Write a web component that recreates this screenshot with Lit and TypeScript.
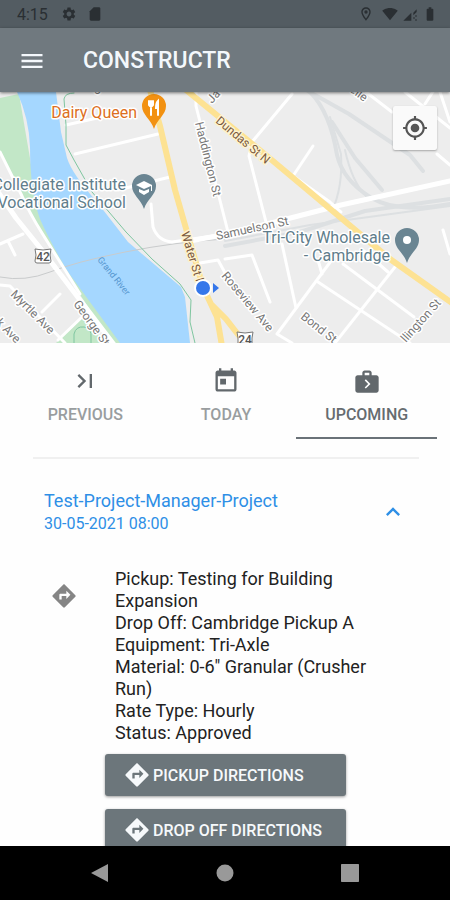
import { LitElement, html, css, svg } from "lit";
import { customElement, property, state } from "lit/decorators.js";
import { classMap } from "lit/directives/class-map.js";

const ICONS: Record<string, string> = {
  settings:
    "M19.14 12.94c.04-.3.06-.61.06-.94 0-.32-.02-.64-.07-.94l2.03-1.58c.18-.14.23-.41.12-.61l-1.92-3.32c-.12-.22-.37-.29-.59-.22l-2.39.96c-.5-.38-1.03-.7-1.62-.94l-.36-2.54c-.04-.24-.24-.41-.48-.41h-3.84c-.24 0-.43.17-.47.41l-.36 2.54c-.59.24-1.13.57-1.62.94l-2.39-.96c-.22-.08-.47 0-.59.22L2.74 8.87c-.12.21-.08.47.12.61l2.03 1.58c-.05.3-.09.63-.09.94s.02.64.07.94l-2.03 1.58c-.18.14-.23.41-.12.61l1.92 3.32c.12.22.37.29.59.22l2.39-.96c.5.38 1.03.7 1.62.94l.36 2.54c.05.24.24.41.48.41h3.84c.24 0 .44-.17.47-.41l.36-2.54c.59-.24 1.13-.56 1.62-.94l2.39.96c.22.08.47 0 .59-.22l1.92-3.32c.12-.22.07-.47-.12-.61l-2.01-1.58zM12 15.6c-1.98 0-3.6-1.62-3.6-3.6s1.62-3.6 3.6-3.6 3.6 1.62 3.6 3.6-1.62 3.6-3.6 3.6z",
  card: "M18 2h-8L4 8v12c0 1.1.9 2 2 2h12c1.1 0 2-.9 2-2V4c0-1.1-.9-2-2-2z",
  place:
    "M12 2C8.13 2 5 5.13 5 9c0 5.25 7 13 7 13s7-7.75 7-13c0-3.87-3.13-7-7-7zM7 9c0-2.76 2.24-5 5-5s5 2.24 5 5c0 2.88-2.88 7.19-5 9.88C9.92 16.21 7 11.85 7 9zM12 6.5a2.5 2.5 0 1 0 0 5 2.5 2.5 0 0 0 0-5z",
  wifi: "M12.01 21.49L23.64 7c-.45-.34-4.93-4-11.64-4C5.28 3 .81 6.66.36 7l11.63 14.49.01.01.01-.01z",
  signal: "M2 22L14 10v12zM17 10l5-5v4l-5 5zM17 17h2v2h-2zM20 14h2v2h-2zM20 20h2v2h-2z",
  battery:
    "M15.67 4H14V2h-4v2H8.33C7.6 4 7 4.6 7 5.33v15.33C7 21.4 7.6 22 8.33 22h7.33c.74 0 1.34-.6 1.34-1.33V5.33C17 4.6 16.4 4 15.67 4z",
  menu: "M3 18h18v-2H3v2zm0-5h18v-2H3v2zm0-7v2h18V6H3z",
  locate:
    "M12 8c-2.21 0-4 1.79-4 4s1.79 4 4 4 4-1.79 4-4-1.79-4-4-4zm8.94 3c-.46-4.17-3.77-7.48-7.94-7.94V1h-2v2.06C6.83 3.52 3.52 6.83 3.06 11H1v2h2.06c.46 4.17 3.77 7.48 7.94 7.94V23h2v-2.06c4.17-.46 7.48-3.77 7.94-7.94H23v-2h-2.06zM12 19c-3.87 0-7-3.13-7-7s3.13-7 7-7 7 3.13 7 7-3.13 7-7 7z",
  last: "M5.59 7.41L10.18 12l-4.59 4.59L7 18l6-6-6-6zM16 6h2v12h-2z",
  today:
    "M19 3h-1V1h-2v2H8V1H6v2H5c-1.11 0-1.99.9-1.99 2L3 19c0 1.1.89 2 2 2h14c1.1 0 2-.9 2-2V5c0-1.1-.9-2-2-2zm0 16H5V8h14v11zM7 10h5v5H7z",
  next: "M20 7h-4V5c0-.55-.22-1.05-.59-1.41C15.05 3.22 14.55 3 14 3h-4c-1.1 0-2 .9-2 2v2H4c-1.1 0-2 .9-2 2v11c0 1.1.9 2 2 2h16c1.1 0 2-.9 2-2V9c0-1.1-.9-2-2-2zM10 5h4v2h-4V5zm1 13.5l-1-1 3-3-3-3 1-1 4 4-4 4z",
  collapse: "M12 8l-6 6 1.41 1.41L12 10.83l4.59 4.58L18 14z",
  directions:
    "M21.71 11.29l-9-9c-.39-.39-1.02-.39-1.41 0l-9 9c-.39.39-.39 1.02 0 1.41l9 9c.39.39 1.02.39 1.41 0l9-9c.39-.38.39-1.01 0-1.41zM14 14.5V12h-4v3H8v-4c0-.55.45-1 1-1h5V7.5l3.5 3.5-3.5 3.5z",
  back: "M20 3v18L3 12z",
  home: "M12 3.500a8.500 8.500 0 1 0 0 17 8.500 8.500 0 0 0 0-17z",
  recent: "M4 3h16c.6 0 1 .4 1 1v16c0 .6-.4 1-1 1H4c-.6 0-1-.4-1-1V4c0-.6.4-1 1-1z",
};

@customElement("app-icon")
export class AppIcon extends LitElement {
  @property() name = "";

  static styles = css`
    :host {
      display: block;
      flex: none;
      width: 28px;
      height: 28px;
    }
    .glyph {
      display: block;
      width: 100%;
      height: 100%;
      fill: currentColor;
    }
  `;

  render() {
    return html`<svg class="glyph" viewBox="0 0 24 24" aria-hidden="true">
      <path d=${ICONS[this.name]}></path>
    </svg>`;
  }
}

/* Side streets, drawn as plain white strokes. */
const STREETS = [
  "M66 33L115 22",
  "M75 62L158 42",
  "M118 98L170 85",
  "M196 0V14L228 140",
  "M292 2L252 50L249 64L266 130",
  "M313 54L293 84L330 110L341 120",
  "M366 0L392 20M437 62L450 73",
  "M405 0L450 36",
  "M425 12L434 -2M440 0L450 30",
  "M151 112L153 135Q158 149 172 150L240 140",
  "M200 171L218 168L230 190",
  "M225 167L252 163L270 210",
  "M282 152L296 216",
  "M318 168L322 182M331 169L277 242L292 251",
  "M318 190L410 251",
  "M343 172L414 225",
  "M364 159L388 180",
  "M395 175L335 251",
  "M443 138L450 162",
  "M0 152L23 142M8 149L15 163",
  "M0 193L10 194L65 251M60 202L42 220",
  "M82 225L58 248",
];

@customElement("street-map")
export class StreetMap extends LitElement {
  static styles = css`
    :host {
      display: block;
      position: relative;
      height: 251px;
      overflow: hidden;
      background: #ededed;
    }
    .canvas {
      display: block;
      width: 100%;
      height: 100%;
      font-family: Roboto, "Liberation Sans", sans-serif;
    }
    .line {
      fill: none;
      stroke-linecap: round;
      stroke-linejoin: round;
    }
    .street { stroke: #ffffff; stroke-width: 3; }
    .wide { stroke: #ffffff; stroke-width: 5; }
    .artery { stroke: #fde293; stroke-width: 6; }
    .rail { stroke: #dde0e2; stroke-width: 4; }
    .thin { stroke-width: 2; }
    .trail { stroke: #7fc6a0; stroke-width: 1; }
    .border { stroke: #c9cbcc; stroke-width: 1; }
    .water { fill: #a5d7ff; }
    .park { fill: #c2e7c7; }
    .label {
      paint-order: stroke;
      stroke: #ffffff;
      stroke-width: 3px;
      stroke-linejoin: round;
    }
    .place { font-size: 16px; fill: #607d8b; }
    .food { font-size: 16px; fill: #dd6f22; }
    .road { font-size: 12px; fill: #777777; }
    .major { font-size: 12px; fill: #7b5a3e; stroke: #fff3cf; }
    .river { font-size: 9px; fill: #5596cf; }
    .end { text-anchor: end; }
    .shield { fill: #ffffff; stroke: #777777; stroke-width: 1; }
    .route { font-size: 12px; font-weight: 500; fill: #555555; text-anchor: middle; }
    .pin { fill: #6a8592; }
    .pin-food { fill: #f29111; }
    .white { fill: #ffffff; }
    .me { fill: #3577ea; }
    .fork { fill: none; stroke: #ffffff; stroke-width: 2; stroke-linecap: round; }
    .locate {
      position: absolute;
      top: 14px;
      right: 13px;
      display: flex;
      align-items: center;
      justify-content: center;
      width: 44px;
      height: 44px;
      padding: 0;
      border: 0;
      border-radius: 2px;
      background: #fafafa;
      color: #555555;
      box-shadow: 0 1px 2px rgba(0, 0, 0, 0.3);
    }
    .locate app-icon { width: 26px; height: 26px; }
  `;

  render() {
    const pin = "M0 18C-3 8-12 4-12-5A12 12 0 0 1 12-5C12 4 3 8 0 18Z";
    return html`
      <svg class="canvas" viewBox="0 0 450 251" preserveAspectRatio="xMidYMid slice" role="img" aria-label="Map">
        <path class="park" d="M0 6L19 2L40 125L122 251H112L65 180L35 130L0 62Z"></path>
        <path class="park" d="M82 226L106 251H56Z"></path>
        <path class="line trail" d="M74 251V242Q76 234 84 235T91 246V251"></path>
        <path class="water" d="M17 0Q29 26 30 55Q30 100 40 127Q50 150 68 180L120 251H190L185 205L181 195L128 150L97 110Q72 82 67 66L61 40L56 0Z"></path>
        <path class="line rail" d="M308 -1L349 22L410 63L423 79"></path>
        <path class="line rail" d="M310 0Q330 20 337 63Q343 88 370 105T450 112"></path>
        <path class="line rail" d="M332 30L355 66L382 98"></path>
        <path class="line rail thin" d="M330 25L341 62Q343 95 332 119M345 58Q352 90 366 104"></path>
        <path class="line rail" d="M225 154L300 140L365 119L450 107"></path>
        <path class="line rail thin" d="M225 149L310 133L450 114"></path>
        <path class="line border" d="M0 185Q25 190 50 180T125 160T225 147"></path>
        ${STREETS.map((d) => svg`<path class="line street" d=${d}></path>`)}
        <path class="line wide" d="M190 149L222 143L275 130L341 113L450 89"></path>
        <path class="line street" d="M0 60L22 104Q30 122 42 141L80 202"></path>
        <path class="line wide" d="M-2 100L16 126L45 162L80 208L115 254"></path>
        <path class="line trail" d="M74 1Q65 1 64 7L66 33V53L74 68L92 100L126 140L152 167L180 192L191 208L190 230L195 251"></path>
        <path class="line artery" d="M186 -2L267 64L341 126L390 167L452 211"></path>
        <path class="line artery" d="M150 -2L160 34L175 98L185 133L203 195L217 225L222 254M212 213L226 227L240 245"></path>

        <text class="label road" transform="translate(80 -3) rotate(8)">Ang</text>
        <text class="label road" transform="translate(195 31) rotate(76)">Haddington St</text>
        <text class="label major" transform="translate(215 30) rotate(40)">Dundas St N</text>
        <text class="label road" transform="translate(212 12) rotate(-48)">Ja</text>
        <text class="label road" transform="translate(349 -1) rotate(36)">elle</text>
        <text class="label road" transform="translate(217 148) rotate(-12)">Samuelson St</text>
        <text class="label major" transform="translate(181 141) rotate(73)">Water St N</text>
        <text class="label road" transform="translate(221 184) rotate(50)">Roseview Ave</text>
        <text class="label road" transform="translate(300 226) rotate(38)">Bond St</text>
        <text class="label road" transform="translate(406 251) rotate(-48)">llington St</text>
        <text class="label road" transform="translate(10 203) rotate(45)">Myrtle Ave</text>
        <text class="label road" transform="translate(-12 224) rotate(45)">ark Ave</text>
        <text class="label road" transform="translate(73 212) rotate(54)">George St</text>
        <text class="river" transform="translate(97 168) rotate(51)">Grand River</text>

        <path class="shield" d="M35 157Q43 159 51 157L50 163L51 169Q51 171 49 171H37Q35 171 35 169L36 163Z"></path>
        <text class="route" x="43" y="169">42</text>
        <path class="shield" d="M237 240Q245 242 253 240L252 246V256H238V246Z"></path>
        <text class="route" x="245" y="252">24</text>

        <text class="label food end" x="137" y="26">Dairy Queen</text>
        <g transform="translate(154 19)">
          <path class="pin-food" d=${pin}></path>
          <path class="fork" d="M-3-10V4M-5-10V-6Q-3-3-1-6V-10"></path>
          <path class="fork" d="M4 4V-10Q2-8 2-3H4"></path>
        </g>
        <text class="label place end" x="126" y="98">Collegiate Institute</text>
        <text class="label place end" x="126" y="116">Vocational School</text>
        <g transform="translate(144 99)">
          <path class="pin" d=${pin}></path>
          <path class="white" d="M-8-6L0-10L8-6V0H7V-5L0-2ZM-5-2L0 0L5-2V1L0 4L-5 1Z"></path>
        </g>
        <text class="label place end" x="390" y="151">Tri-City Wholesale</text>
        <text class="label place end" x="390" y="169">- Cambridge</text>
        <g transform="translate(407 153)">
          <path class="pin" d=${pin}></path>
          <circle class="white" cy="-5" r="4"></circle>
        </g>
        <circle class="white" cx="203" cy="196" r="9"></circle>
        <circle class="me" cx="203" cy="196" r="7"></circle>
        <path class="me" d="M213 191L219 196L213 201Z"></path>
      </svg>
      <button class="locate" aria-label="My location"><app-icon name="locate"></app-icon></button>
    `;
  }
}

const TABS = [
  { icon: "last", label: "PREVIOUS" },
  { icon: "today", label: "TODAY" },
  { icon: "next", label: "UPCOMING" },
];

const DETAILS = [
  "Pickup: Testing for Building Expansion",
  "Drop Off: Cambridge Pickup A",
  "Equipment: Tri-Axle",
  'Material: 0-6" Granular (Crusher Run)',
  "Rate Type: Hourly",
  "Status: Approved",
];

@customElement("app-root")
export class AppRoot extends LitElement {
  @state() private selected = "UPCOMING";
  @state() private open = true;

  static styles = css`
    :host {
      display: flex;
      flex-direction: column;
      height: 100vh;
      overflow: hidden;
      background: #fefefe;
      color: #222222;
      font-family: Roboto, "Liberation Sans", sans-serif;
    }
    button {
      margin: 0;
      padding: 0;
      border: 0;
      background: none;
      color: inherit;
      font: inherit;
      cursor: pointer;
    }
    .status {
      display: flex;
      flex: none;
      align-items: center;
      height: 28px;
      padding: 0 12px 0 17px;
      background: #535c62;
      color: #2a2f33;
      font-size: 16px;
    }
    .status app-icon { width: 16px; height: 16px; }
    .notices { display: flex; flex: 1; gap: 10px; padding-left: 13px; }
    .signals { display: flex; align-items: center; gap: 4px; }
    .signals app-icon:first-child { margin-right: 4px; }
    .bar {
      display: flex;
      flex: none;
      align-items: center;
      gap: 37px;
      height: 64px;
      padding: 2px 18px 0;
      box-sizing: border-box;
      background: #70797f;
      color: #f4f8fc;
      box-shadow: 0 1px 3px rgba(0, 0, 0, 0.5);
      z-index: 1;
    }
    .title { margin: 0; font-size: 23px; font-weight: 500; line-height: 28px; }
    street-map { flex: none; }
    .content { flex: 1; min-height: 0; overflow: hidden; }
    .tabs {
      display: grid;
      grid-template-columns: repeat(3, 1fr);
      padding: 9px 13px 0 15px;
    }
    .tab {
      display: flex;
      flex-direction: column;
      align-items: center;
      gap: 10px;
      height: 87px;
      padding-top: 15px;
      box-sizing: border-box;
      border-bottom: 2px solid transparent;
      color: #999d9f;
      font-size: 16px;
      font-weight: 500;
      line-height: 20px;
    }
    .tab app-icon { color: #62686c; }
    .current { border-color: #6a7278; color: #666c70; }
    .rule { height: 2px; margin: 18px 31px 0 33px; border: 0; background: #f0f0f0; }
    .heading { margin: 0; font-weight: 400; }
    .toggle {
      display: flex;
      align-items: center;
      justify-content: space-between;
      width: 100%;
      padding: 30px 43px 0 44px;
      color: #2e8fe6;
      text-align: left;
    }
    .name { display: block; font-size: 18px; line-height: 24px; }
    .date { display: block; font-size: 16px; line-height: 22px; }
    .job { display: flex; padding: 33px 64px 0 50px; }
    .mark { margin-top: 14px; color: #858585; }
    .lines {
      flex: 1;
      margin: 0;
      padding: 0 0 0 37px;
      list-style: none;
      font-size: 18px;
      line-height: 22px;
    }
    .actions {
      display: flex;
      flex-direction: column;
      gap: 13px;
      padding: 10px 104px 0 105px;
    }
    .action {
      display: flex;
      align-items: center;
      height: 42px;
      padding: 0 18px;
      gap: 2px;
      border-radius: 3px;
      background: #6c767b;
      color: #f6f9fb;
      font-size: 16px;
      font-weight: 500;
      white-space: nowrap;
      box-shadow: 0 1px 3px rgba(0, 0, 0, 0.4);
    }
    .nav {
      display: grid;
      flex: none;
      grid-template-columns: repeat(3, 1fr);
      justify-items: center;
      align-items: center;
      height: 54px;
      padding: 0 38px;
      background: #000000;
      color: #999999;
    }
    .nav app-icon { width: 24px; height: 24px; }
  `;

  render() {
    return html`
      <div class="status">
        <span>4:15</span>
        <div class="notices">
          <app-icon name="settings"></app-icon>
          <app-icon name="card"></app-icon>
        </div>
        <div class="signals">
          <app-icon name="place"></app-icon>
          <app-icon name="wifi"></app-icon>
          <app-icon name="signal"></app-icon>
          <app-icon name="battery"></app-icon>
        </div>
      </div>
      <header class="bar">
        <button aria-label="Menu"><app-icon name="menu"></app-icon></button>
        <h1 class="title">CONSTRUCTR</h1>
      </header>
      <street-map></street-map>
      <main class="content">
        <div class="tabs" role="tablist">
          ${TABS.map(
            (t) => html`<button
              role="tab"
              aria-selected=${t.label === this.selected}
              class=${classMap({ tab: true, current: t.label === this.selected })}
              @click=${() => (this.selected = t.label)}
            >
              <app-icon name=${t.icon}></app-icon>${t.label}
            </button>`,
          )}
        </div>
        <hr class="rule" />
        <h2 class="heading">
          <button class="toggle" aria-expanded=${this.open} @click=${() => (this.open = !this.open)}>
            <span>
              <span class="name">Test-Project-Manager-Project</span>
              <span class="date">30-05-2021 08:00</span>
            </span>
            <app-icon name="collapse"></app-icon>
          </button>
        </h2>
        ${this.open
          ? html`<div class="job">
                <app-icon class="mark" name="directions"></app-icon>
                <ul class="lines">
                  ${DETAILS.map((d) => html`<li>${d}</li>`)}
                </ul>
              </div>
              <div class="actions">
                <button class="action"><app-icon name="directions"></app-icon>PICKUP DIRECTIONS</button>
                <button class="action"><app-icon name="directions"></app-icon>DROP OFF DIRECTIONS</button>
              </div>`
          : null}
      </main>
      <nav class="nav" aria-label="System">
        <button aria-label="Back"><app-icon name="back"></app-icon></button>
        <button aria-label="Home"><app-icon name="home"></app-icon></button>
        <button aria-label="Recent apps"><app-icon name="recent"></app-icon></button>
      </nav>
    `;
  }
}
